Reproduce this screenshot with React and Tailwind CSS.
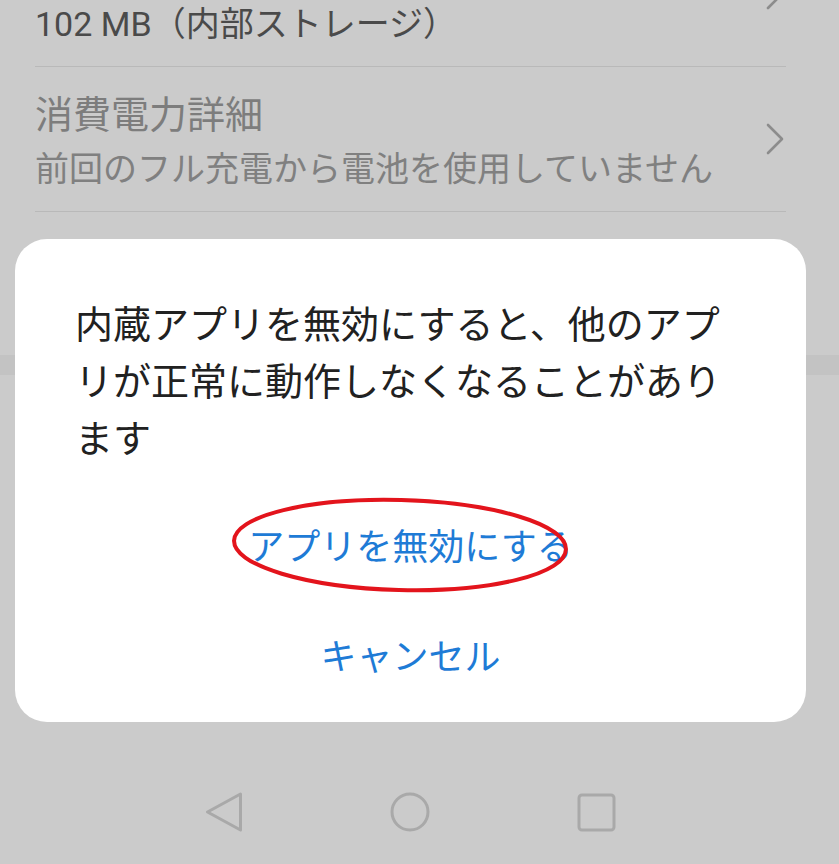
const rows = [
  { id: "storage", title: "", sub: "102 MB（内部ストレージ）", subColor: "text-[#4a4a4a]", border: true },
  { id: "battery", title: "消費電力詳細", sub: "前回のフル充電から電池を使用していません", subColor: "text-[#808080]", border: true },
  { id: "open", title: "", sub: "", subColor: "text-[#808080]", border: false },
];

function Chevron() {
  return (
    <svg width="20" height="32" viewBox="0 0 20 32" className="shrink-0 self-center">
      <path d="M2 2 L16 16 L2 30" fill="none" stroke="#8c8c8c" strokeWidth="2.6" strokeLinecap="round" strokeLinejoin="round" />
    </svg>
  );
}

function SettingRow({ title, sub, subColor, border }) {
  return (
    <div className={`flex ${border ? "h-[145px] border-b border-[#b9b9b9]" : "h-[143px]"}`}>
      <div className="flex-1 pt-[25px]">
        <div className="h-[46px] text-[38px] leading-[46px] text-[#7d7d7d]">{title}</div>
        <div className={`h-[62px] text-[34px] leading-[62px] ${subColor}`}>{sub}</div>
      </div>
      <Chevron />
    </div>
  );
}

function NavBar() {
  return (
    <div className="flex h-[104px] items-center gap-[146px] pl-[204px]">
      <svg width="40" height="40" viewBox="0 0 40 40">
        <path d="M36.5 2 L3.5 20 L36.5 38 Z" fill="none" stroke="#a9a9a9" strokeWidth="3" strokeLinejoin="round" />
      </svg>
      <svg width="40" height="40" viewBox="0 0 40 40">
        <circle cx="20" cy="20" r="18" fill="none" stroke="#a9a9a9" strokeWidth="3" />
      </svg>
      <svg width="40" height="40" viewBox="0 0 40 40">
        <rect x="3" y="3" width="35" height="35" rx="3" fill="none" stroke="#a9a9a9" strokeWidth="3" />
      </svg>
    </div>
  );
}

export default function App() {
  return (
    <div className="relative h-[864px] w-full overflow-hidden bg-[#cbcbcb] font-[Roboto,'Noto_Sans_CJK_JP',sans-serif]">
      <div className="flex h-full flex-col">
        <div className="-mt-[78px] pl-[35px] pr-[53px]">
          {rows.map((r) => (
            <SettingRow key={r.id} {...r} />
          ))}
        </div>
        <div className="h-[20px] bg-[#c3c3c3]" />
        <div className="flex-1" />
        <NavBar />
      </div>

      {/* dialog */}
      <div className="absolute left-[15px] top-[239px] h-[483px] w-[791px] rounded-[32px] bg-white">
        <p className="px-[60px] pt-[58px] text-[38px] leading-[57px] text-[#212121]">
          内蔵アプリを無効にすると、他のアプリが正常に動作しなくなることがあります
        </p>
        <div className="mt-[25px] flex h-[110px] items-center justify-center text-[36px] text-[#1e7bd6]">
          アプリを無効にする
        </div>
        <div className="flex h-[110px] items-center justify-center text-[36px] text-[#1e7bd6]">
          キャンセル
        </div>
        <svg
          width="350"
          height="110"
          viewBox="0 0 350 110"
          className="pointer-events-none absolute left-[210px] top-[251px]"
        >
          <ellipse cx="175" cy="55" rx="166" ry="45" fill="none" stroke="#e3141c" strokeWidth="4" transform="rotate(1.5 175 55)" />
        </svg>
      </div>
    </div>
  );
}
